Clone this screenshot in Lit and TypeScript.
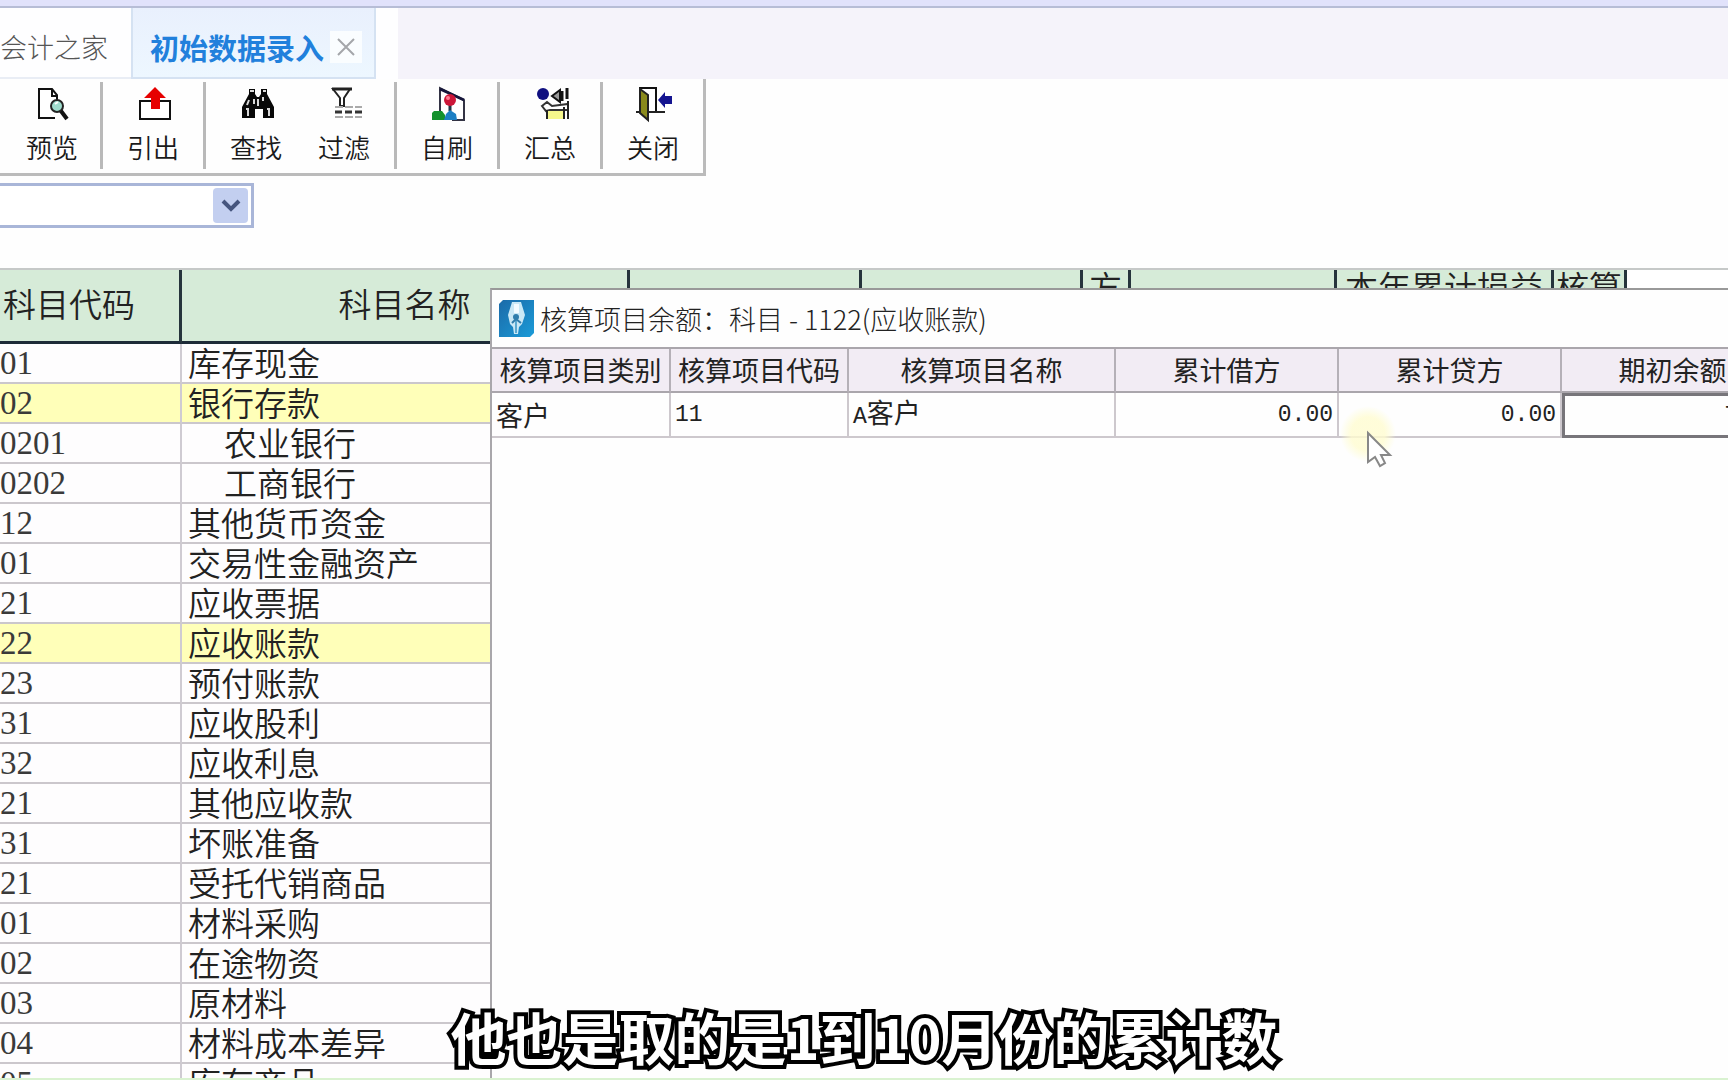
import { LitElement, html, css, svg } from "lit";
import { customElement } from "lit/decorators.js";
import { classMap } from "lit/directives/class-map.js";

const icons: Record<string, unknown> = {
  preview: svg`<path d="M20 31H4V2h13l5 6v7" fill="#fff" stroke="#111" stroke-width="2"/><path d="M17 2v7h6" fill="none" stroke="#111" stroke-width="2"/><circle cx="22" cy="19" r="6" fill="#9fdccd" stroke="#222" stroke-width="2"/><path d="M20 17l3-2" stroke="#fff" stroke-width="2"/><path d="M26 24l6 8" stroke="#111" stroke-width="4"/>`,
  exportUp: svg`<rect x="4" y="14" width="30" height="18" fill="#fff" stroke="#111" stroke-width="2"/><path d="M19 0L30 11H24V22H15V11H8Z" fill="#e60000"/>`,
  find: svg`<path d="M10 2h6v5l2 3h2l2-3V2h6v5l7 13v11H24v-9h-8v9H3V20L10 7Z" fill="#080808"/><path d="M11 4h4M24 4h3M7 22h2v7M28 22h2v7M10 13l-2 5M15 12v5M19 12v7M24 10v4" fill="none" stroke="#d9d9d9" stroke-width="2"/>`,
  filter: svg`<path d="M6 2H23L17 11v8h-4v-8Z" fill="#fff" stroke="#222" stroke-width="2"/><path d="M5 2h20" stroke="#222" stroke-width="3"/><path d="M8 20h27M8 30h27" stroke="#aaa" stroke-width="2" stroke-dasharray="8 2"/><path d="M8 25h27" stroke="#333" stroke-width="3" stroke-dasharray="7 3"/>`,
  refresh: svg`<path d="M10 27V1L34 13V33H22" fill="#fff" stroke="#334" stroke-width="2"/><path d="M10 2L34 13" stroke="#15153a" stroke-width="3"/><path d="M20 15v9" stroke="#234" stroke-width="3"/><circle cx="20" cy="13" r="6" fill="#cc1638"/><circle cx="18" cy="11" r="2" fill="#ff7890"/><path d="M4 24h8l3 4v5H2v-7Z" fill="#14912d"/><path d="M16 27l4-4 6 4 1 6H14Z" fill="#1c7fc4"/>`,
  summary: svg`<circle cx="10" cy="7" r="6" fill="#101080"/><path d="M19 9l8-6v12Z" fill="#999" stroke="#111" stroke-width="2"/><path d="M29 4v10M34 1v11" stroke="#111" stroke-width="3"/><path d="M9 19l5-4 5 4 16-2v6H17l-4 1Z" fill="#fff" stroke="#333" stroke-width="2"/><rect x="14" y="24" width="17" height="8" fill="#f6f78c"/><path d="M14 32V23M31 20v12M35 14v18" stroke="#222" stroke-width="2"/>`,
  close: svg`<path d="M4 1h16v24H4Z" fill="#fff" stroke="#111" stroke-width="2"/><path d="M0 25h29" stroke="#222" stroke-width="2"/><path d="M4 2l8 6v25l-8-7Z" fill="#8a8a1c" stroke="#222" stroke-width="2"/><path d="M22 13l7-8v4h7v8h-7v4Z" fill="#141490"/>`,
};

const tools = [
  [{ label: "预览", icon: "preview" }],
  [{ label: "引出", icon: "exportUp" }],
  [{ label: "查找", icon: "find" }, { label: "过滤", icon: "filter" }],
  [{ label: "自刷", icon: "refresh" }],
  [{ label: "汇总", icon: "summary" }],
  [{ label: "关闭", icon: "close" }],
];

interface Account { code: string; name: string; child?: boolean; marked?: boolean }

const accounts: Account[] = [
  { code: "01", name: "库存现金" },
  { code: "02", name: "银行存款", marked: true },
  { code: "0201", name: "农业银行", child: true },
  { code: "0202", name: "工商银行", child: true },
  { code: "12", name: "其他货币资金" },
  { code: "01", name: "交易性金融资产" },
  { code: "21", name: "应收票据" },
  { code: "22", name: "应收账款", marked: true },
  { code: "23", name: "预付账款" },
  { code: "31", name: "应收股利" },
  { code: "32", name: "应收利息" },
  { code: "21", name: "其他应收款" },
  { code: "31", name: "坏账准备" },
  { code: "21", name: "受托代销商品" },
  { code: "01", name: "材料采购" },
  { code: "02", name: "在途物资" },
  { code: "03", name: "原材料" },
  { code: "04", name: "材料成本差异" },
  { code: "05", name: "库存商品" },
];

@customElement("app-tabs")
export class AppTabs extends LitElement {
  static styles = css`
    :host { display: block; }
    .bar { display: flex; height: 71px; background: #fefeff; }
    .tab { width: 131px; box-sizing: border-box; border: 0; border-bottom: 2px solid #e9edf5; padding: 8px 0 0; background: none; font: 300 27px/36px "Noto Sans CJK SC", sans-serif; color: #555; text-align: left; white-space: nowrap; }
    .active { display: flex; align-items: center; gap: 6px; width: 245px; box-sizing: border-box; padding: 8px 0 0 17px; background: linear-gradient(#e9f0fd, #edf7ff); border: 2px solid #d5e2f2; border-top: 0; }
    .current { border: 0; padding: 0; background: none; font: 700 29px/36px "Noto Sans CJK SC", sans-serif; color: #2180dc; white-space: nowrap; }
    .x { width: 32px; height: 32px; padding: 7px; border: 0; background: #fafdff; }
    .x svg { display: block; }
    .rest { flex: 1; margin-left: 22px; background: #f5f3fa; }
  `;
  render() {
    return html`<nav class="bar">
      <button class="tab">会计之家</button>
      <div class="active">
        <button class="current">初始数据录入</button>
        <button class="x" aria-label="关闭标签"><svg width="18" height="18"><path d="M1 1L17 17M17 1L1 17" stroke="#a4a6aa" stroke-width="2"/></svg></button>
      </div>
      <div class="rest"></div>
    </nav>`;
  }
}

@customElement("app-toolbar")
export class AppToolbar extends LitElement {
  static styles = css`
    :host { display: block; }
    .bar { display: inline-flex; box-sizing: border-box; height: 97px; padding: 3px 0 4px; border-right: 3px solid #bbb; border-bottom: 3px solid #bbb; background: #fefefe; vertical-align: top; }
    .group { display: flex; gap: 12px; padding: 0 12px; border-left: 3px solid #b9b9b9; }
    .group:first-child { border-left: 0; padding: 0 10px 0 14px; }
    .tool { display: flex; flex-direction: column; align-items: center; gap: 9px; width: 76px; padding: 5px 0 0; border: 0; background: none; color: #1a1a1a; font: 350 26px/34px "Noto Sans CJK SC", sans-serif; }
    .glyph { overflow: visible; flex: none; }
  `;
  render() {
    return html`<div class="bar" role="toolbar">
      ${tools.map((g) => html`<div class="group">${g.map((t) => html`<button class="tool">
        <svg class="glyph" width="34" height="34" viewBox="0 0 34 34">${icons[t.icon]}</svg>${t.label}
      </button>`)}</div>`)}
    </div>`;
  }
}

@customElement("account-grid")
export class AccountGrid extends LitElement {
  static styles = css`
    :host { display: block; color: #222; }
    .grid { width: 100%; table-layout: fixed; border-collapse: separate; border-spacing: 0; border-top: 2px solid #c6c9c8; }
    th { height: 74px; box-sizing: border-box; padding: 0 0 5px; background: #d6ebd8; border-right: 3px solid #26343c; border-bottom: 3px solid #1d2b38; font: 350 33px/33px "Noto Sans CJK SC", sans-serif; text-align: center; overflow: hidden; }
    .first { text-align: left; padding-left: 3px; }
    .blank { background: #fff; border-color: transparent; }
    td { height: 40px; box-sizing: border-box; padding: 0; border-right: 2px solid #cfcbd2; border-bottom: 2px solid #cbc7cc; font: 400 33px/34px "Liberation Serif", serif; color: #3a3a3a; white-space: nowrap; background: #fefdfe; }
    .name { padding: 0 0 3px 6px; font: 350 33px/34px "Noto Sans CJK SC", sans-serif; color: #222; }
    .child { padding-left: 42px; }
    .marked td { background: #ffffb9; }
    .w-code { width: 182px; } .w-name { width: 448px; } .w-a { width: 232px; } .w-b { width: 221px; }
    .w-dir { width: 48px; } .w-c { width: 206px; } .w-d { width: 217px; } .w-e { width: 73px; }
  `;
  render() {
    return html`<table class="grid">
      <colgroup><col class="w-code"><col class="w-name"><col class="w-a"><col class="w-b"><col class="w-dir"><col class="w-c"><col class="w-d"><col class="w-e"><col></colgroup>
      <thead><tr>
        <th class="first">科目代码</th><th>科目名称</th><th>累计借方</th><th>累计贷方</th><th>方<br>向</th><th>期初余额</th><th>本年累计损益<br>实际发生额</th><th>核算<br>项目</th><th class="blank"></th>
      </tr></thead>
      <tbody>${accounts.map((a) => html`<tr class=${classMap({ marked: !!a.marked })}>
        <td>${a.code}</td><td class=${classMap({ name: true, child: !!a.child })}>${a.name}</td>
        <td></td><td></td><td></td><td></td><td></td><td></td><td></td>
      </tr>`)}</tbody>
    </table>`;
  }
}

@customElement("balance-dialog")
export class BalanceDialog extends LitElement {
  static styles = css`
    :host { display: block; box-sizing: border-box; overflow: hidden; background: #fefefe; border-left: 2px solid #a9a7ab; border-top: 2px solid #999; }
    .title { display: flex; align-items: center; gap: 6px; height: 57px; padding-left: 7px; }
    .title h1 { margin: 0; font: 300 27px/36px "Noto Sans CJK SC", sans-serif; color: #222; white-space: nowrap; }
    .items { width: 1292px; table-layout: fixed; border-collapse: separate; border-spacing: 0; border-top: 2px solid #aaa6ac; font: 400 27px/36px "Noto Sans CJK SC", sans-serif; color: #222; }
    th { height: 44px; box-sizing: border-box; padding: 0; background: #f2ecf4; border-right: 2px solid #b5b0b7; border-bottom: 2px solid #aaa6ac; font-weight: 400; white-space: nowrap; }
    td { height: 45px; box-sizing: border-box; padding: 0 4px; border-right: 2px solid #cdc8cd; border-bottom: 2px solid #cdc8cd; white-space: nowrap; }
    .mono { font-family: "Liberation Mono", monospace; font-size: 23px; }
    .num { text-align: right; }
    .picked { border: 3px solid #77757a; padding-right: 44px; }
    .c1 { width: 179px; } .c2 { width: 178px; } .c3 { width: 267px; } .c4 { width: 223px; }
  `;
  render() {
    return html`<div class="title">
        <svg width="35" height="37" viewBox="0 0 35 37">
          <defs><linearGradient id="b" x1="0" y1="0" x2="1" y2="1"><stop offset="0" stop-color="#1c6aa8"/><stop offset="1" stop-color="#1a9bd8"/></linearGradient></defs>
          <path d="M4 0H35V33L31 37H0V4Z" fill="url(#b)"/>
          <path d="M13 2h9l4 13-3 9-3 3-1 7h-4l-1-7-3-3-2-9Z" fill="#c9e8f6"/>
          <path d="M15 4h5v9h-5Z" fill="#f3fbff"/><path d="M17 20v13" stroke="#5ba9d1" stroke-width="2"/><circle cx="17" cy="17" r="3" fill="#2f7dac"/><path d="M13 23l4-4 5 4" fill="none" stroke="#2f7dac" stroke-width="2"/>
        </svg>
        <h1>核算项目余额：科目 - 1122(应收账款)</h1>
      </div>
      <table class="items">
        <colgroup><col class="c1"><col class="c2"><col class="c3"><col class="c4"><col class="c4"><col class="c4"></colgroup>
        <thead><tr><th>核算项目类别</th><th>核算项目代码</th><th>核算项目名称</th><th>累计借方</th><th>累计贷方</th><th>期初余额</th></tr></thead>
        <tbody><tr><td>客户</td><td class="mono">11</td><td><span class="mono">A</span>客户</td><td class="mono num">0.00</td><td class="mono num">0.00</td><td class="mono num picked">7</td></tr></tbody>
      </table>`;
  }
}

@customElement("app-root")
export class AppRoot extends LitElement {
  static styles = css`
    :host { display: block; position: relative; height: 100vh; overflow: hidden; background: #fefefe; }
    .strip { height: 6px; background: #e1e2fb; border-bottom: 2px solid #b7bdd6; }
    .pick { display: flex; align-items: center; width: 254px; height: 45px; box-sizing: border-box; margin: 7px 0 40px; border: 3px solid #a9b6d8; border-left: 0; background: #fff; }
    .pick select { flex: 1; width: 100%; height: 36px; border: 0; appearance: none; background: none; }
    .arrow { display: flex; align-items: center; justify-content: center; width: 35px; height: 35px; margin-right: 3px; border-radius: 4px; background: #c3cff0; pointer-events: none; }
    .dialog { position: absolute; left: 490px; top: 288px; right: 0; bottom: 0; }
    .pointer { position: absolute; left: 1340px; top: 406px; }
    .caption { position: absolute; left: 0; right: 0; bottom: 8px; margin: 0; text-align: center; color: #fff; font: 700 56px/72px "Noto Sans CJK SC", sans-serif; -webkit-text-stroke: 8px #000; paint-order: stroke fill; stroke-linejoin: round; }
    .edge { position: absolute; left: 0; right: 0; bottom: 0; height: 2px; background: #d9f2d0; }
  `;
  render() {
    return html`
      <div class="strip"></div>
      <app-tabs></app-tabs>
      <app-toolbar></app-toolbar>
      <div class="pick">
        <select aria-label="科目类别"></select>
        <span class="arrow"><svg width="20" height="14"><path d="M2 2L10 10L18 2" fill="none" stroke="#46557e" stroke-width="4"/></svg></span>
      </div>
      <account-grid></account-grid>
      <balance-dialog class="dialog" role="dialog"></balance-dialog>
      <svg class="pointer" width="56" height="64" viewBox="0 0 56 64"><defs><radialGradient id="halo"><stop offset=".6" stop-color="#fffcd0" stop-opacity=".8"/><stop offset="1" stop-color="#fffcd0" stop-opacity="0"/></radialGradient></defs><circle cx="28" cy="28" r="28" fill="url(#halo)"/><path d="M28 27V56L35 51L40 60L45 57L41 49H50Z" fill="#fff" stroke="#888" stroke-width="2"/></svg>
      <p class="caption">他也是取的是1到10月份的累计数</p>
      <div class="edge"></div>`;
  }
}
